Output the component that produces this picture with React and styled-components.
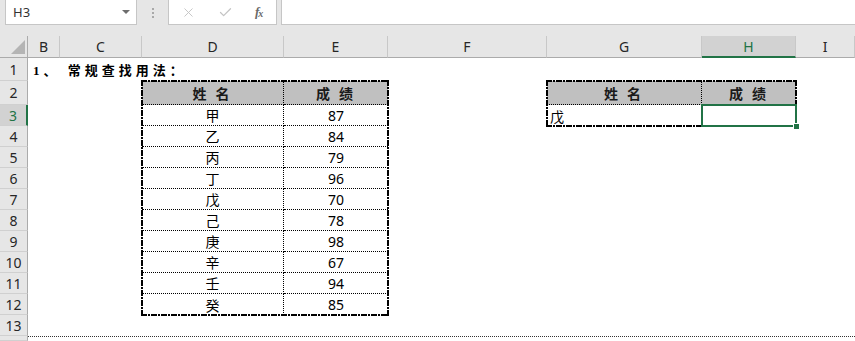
import React from 'react';
import styled, { createGlobalStyle } from 'styled-components';
import { X, Check } from 'lucide-react';

const GREEN = '#217346';

const GlobalStyle = createGlobalStyle`
  html, body {
    margin: 0;
    padding: 0;
    background: #fff;
    overflow: hidden;
  }
  body {
    font-family: "Noto Sans", "Noto Sans CJK SC", sans-serif;
  }
`;

const hDash = 'repeating-linear-gradient(90deg, #000 0 6px, transparent 6px 7px, #000 7px 9px, transparent 9px 10px)';
const vDash = 'repeating-linear-gradient(180deg, #000 0 6px, transparent 6px 7px, #000 7px 9px, transparent 9px 10px)';

const Window = styled.div`
  width: 855px;
  height: 341px;
  display: flex;
  flex-direction: column;
  overflow: hidden;
  background: #fff;
`;

const FormulaBar = styled.div`
  height: 36px;
  flex: none;
  display: flex;
  align-items: flex-start;
  padding-left: 5px;
  box-sizing: border-box;
  background: #e6e6e6;
`;

const NameBox = styled.div`
  width: 132px;
  height: 25px;
  box-sizing: border-box;
  display: flex;
  align-items: center;
  justify-content: space-between;
  padding: 0 6px 0 7px;
  background: #fff;
  border: 1px solid #c6c6c6;
  border-top: none;
  font-size: 13px;
  color: #333;
`;

const Caret = styled.span`
  width: 0;
  height: 0;
  border-left: 4px solid transparent;
  border-right: 4px solid transparent;
  border-top: 4px solid #6d6d6d;
`;

const Grip = styled.div`
  width: 31px;
  height: 25px;
  display: flex;
  flex-direction: column;
  align-items: center;
  justify-content: center;
  gap: 2px;

  span {
    width: 2px;
    height: 2px;
    background: #a8a8a8;
  }
`;

const FxBox = styled.div`
  width: 109px;
  height: 25px;
  box-sizing: border-box;
  display: flex;
  align-items: center;
  gap: 22px;
  padding-left: 12px;
  background: #fff;
  border: 1px solid #c6c6c6;
  border-top: none;
  color: #c4c4c4;
`;

const FxLabel = styled.span`
  font-family: "Liberation Serif", serif;
  font-style: italic;
  font-weight: 700;
  font-size: 13px;
  color: #6a6a6a;
  letter-spacing: -1px;

  sub {
    font-size: 10px;
    vertical-align: -1px;
  }
`;

const FormulaInput = styled.div`
  flex: 1;
  height: 25px;
  margin-left: 4px;
  box-sizing: border-box;
  background: #fff;
  border: 1px solid #c6c6c6;
  border-top: none;
  border-right: none;
`;

const Sheet = styled.div`
  flex: 1;
  display: grid;
  grid-template-columns: 28px 32px 82px 142px 104px 159px 155px 94px 1fr;
  grid-template-rows: 22px 23px 24px repeat(11, 21px) 1fr;
  overflow: hidden;
`;

const Corner = styled.div`
  grid-column: 1;
  grid-row: 1;
  display: flex;
  align-items: flex-end;
  justify-content: flex-end;
  padding: 0 2px 3px 0;
  box-sizing: border-box;
  background: #e6e6e6;
  border-right: 1px solid #ababab;
  border-bottom: 1px solid #ababab;
`;

const Triangle = styled.span`
  width: 0;
  height: 0;
  border-left: 14px solid transparent;
  border-bottom: 14px solid #b4b4b4;
`;

const ColHead = styled.div`
  grid-row: 1;
  display: flex;
  align-items: center;
  justify-content: center;
  box-sizing: border-box;
  font-size: 14px;
  color: ${(p) => (p.$active ? GREEN : '#262626')};
  background: ${(p) => (p.$active ? '#d2d2d2' : '#e6e6e6')};
  border-right: 1px solid #c8c8c8;
  border-bottom: ${(p) => (p.$active ? `2px solid ${GREEN}` : '1px solid #ababab')};
  padding-top: ${(p) => (p.$active ? '1px' : '0')};
`;

const RowHead = styled.div`
  grid-column: 1;
  display: flex;
  align-items: center;
  justify-content: center;
  box-sizing: border-box;
  overflow: hidden;
  font-size: 14px;
  color: ${(p) => (p.$active ? GREEN : '#262626')};
  background: ${(p) => (p.$active ? '#d2d2d2' : '#e6e6e6')};
  border-right: ${(p) => (p.$active ? `2px solid ${GREEN}` : '1px solid #ababab')};
  border-bottom: 1px solid #d0d0d0;
`;

const Title = styled.div`
  grid-column: 2 / span 4;
  grid-row: 2;
  display: flex;
  align-items: center;
  padding-left: 5px;
  font-family: "Liberation Serif", "Noto Sans CJK SC", serif;
  font-weight: 700;
  font-size: 13px;
  letter-spacing: 4px;
  color: #000;
  white-space: pre;
`;

const Frame = styled.div`
  position: relative;
  grid-column: ${(p) => p.$col} / span 2;
  grid-row: 3 / span ${(p) => p.$rows};
  display: grid;
  grid-template-columns: ${(p) => p.$cols};
  grid-template-rows: 24px repeat(${(p) => p.$rows - 1}, 21px);

  &::after {
    content: '';
    position: absolute;
    inset: -1px;
    pointer-events: none;
    background:
      ${hDash} top left / 100% 2px no-repeat,
      ${hDash} bottom left / 100% 2px no-repeat,
      ${vDash} top left / 2px 100% no-repeat,
      ${vDash} top right / 2px 100% no-repeat;
  }
`;

const Cell = styled.div`
  display: flex;
  align-items: center;
  justify-content: ${(p) => (p.$left ? 'flex-start' : 'center')};
  padding-left: ${(p) => (p.$left ? '3px' : '0')};
  box-sizing: border-box;
  font-size: 14px;
  color: #000;
  background: ${(p) => (p.$head ? '#c0c0c0' : 'transparent')};
  border-right: ${(p) => (p.$lastCol ? 'none' : '1px dotted #000')};
  border-bottom: ${(p) => (p.$lastRow ? 'none' : '1px dotted #000')};
`;

const HeadText = styled.span`
  font-family: "Noto Sans CJK SC", sans-serif;
  font-weight: 700;
  font-size: 14px;
  letter-spacing: 3px;
  color: #1a1a1a;
`;

const Selection = styled.div`
  position: relative;
  z-index: 2;
  grid-column: 8;
  grid-row: 4;
  margin: -1px;
  border: 2px solid ${GREEN};

  &::after {
    content: '';
    position: absolute;
    right: -5px;
    bottom: -5px;
    width: 5px;
    height: 5px;
    background: ${GREEN};
    border: 1px solid #fff;
  }
`;

const PageBreak = styled.div`
  grid-column: 2 / -1;
  grid-row: 15;
  border-top: 1px dotted #333;
`;

const columns = [
  { label: 'B', col: 2 },
  { label: 'C', col: 3 },
  { label: 'D', col: 4 },
  { label: 'E', col: 5 },
  { label: 'F', col: 6 },
  { label: 'G', col: 7 },
  { label: 'H', col: 8, active: true },
  { label: 'I', col: 9 },
];

const scores = [
  ['甲', 87],
  ['乙', 84],
  ['丙', 79],
  ['丁', 96],
  ['戊', 70],
  ['己', 78],
  ['庚', 98],
  ['辛', 67],
  ['壬', 94],
  ['癸', 85],
];

export default function App() {
  return (
    <Window>
      <GlobalStyle />
      <FormulaBar>
        <NameBox>
          H3
          <Caret />
        </NameBox>
        <Grip>
          <span />
          <span />
          <span />
        </Grip>
        <FxBox>
          <X size={15} strokeWidth={1.5} />
          <Check size={15} strokeWidth={2} />
          <FxLabel>
            f<sub>x</sub>
          </FxLabel>
        </FxBox>
        <FormulaInput />
      </FormulaBar>

      <Sheet>
        <Corner>
          <Triangle />
        </Corner>
        {columns.map((c) => (
          <ColHead key={c.label} $active={c.active} style={{ gridColumn: c.col }}>
            {c.label}
          </ColHead>
        ))}
        {Array.from({ length: 14 }, (_, i) => (
          <RowHead key={i} $active={i === 2} style={{ gridRow: i + 2 }}>
            {i < 13 ? i + 1 : null}
          </RowHead>
        ))}

        <Title>1、 常规查找用法：</Title>

        <Frame $col={4} $rows={11} $cols="142px 104px">
          <Cell $head>
            <HeadText>姓 名</HeadText>
          </Cell>
          <Cell $head $lastCol>
            <HeadText>成 绩</HeadText>
          </Cell>
          {scores.map(([name, score], i) => (
            <React.Fragment key={name}>
              <Cell $lastRow={i === scores.length - 1}>{name}</Cell>
              <Cell $lastCol $lastRow={i === scores.length - 1}>
                {score}
              </Cell>
            </React.Fragment>
          ))}
        </Frame>

        <Frame $col={7} $rows={2} $cols="155px 94px">
          <Cell $head>
            <HeadText>姓 名</HeadText>
          </Cell>
          <Cell $head $lastCol>
            <HeadText>成 绩</HeadText>
          </Cell>
          <Cell $left $lastRow>
            戊
          </Cell>
          <Cell $lastCol $lastRow />
        </Frame>

        <Selection />
        <PageBreak />
      </Sheet>
    </Window>
  );
}
